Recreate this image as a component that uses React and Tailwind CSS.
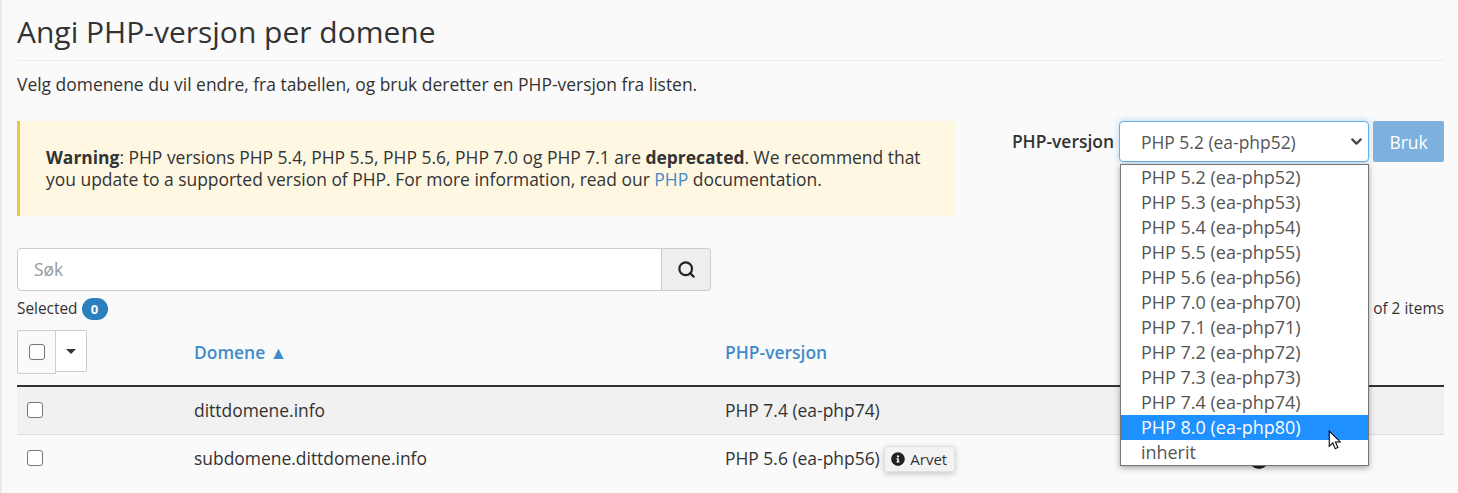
import { Search, ChevronDown } from 'lucide-react';

const versions = [
  'PHP 5.2 (ea-php52)',
  'PHP 5.3 (ea-php53)',
  'PHP 5.4 (ea-php54)',
  'PHP 5.5 (ea-php55)',
  'PHP 5.6 (ea-php56)',
  'PHP 7.0 (ea-php70)',
  'PHP 7.1 (ea-php71)',
  'PHP 7.2 (ea-php72)',
  'PHP 7.3 (ea-php73)',
  'PHP 7.4 (ea-php74)',
  'PHP 8.0 (ea-php80)',
  'inherit',
];

// native-looking checkbox, same box in the header and the rows
function Box() {
  return <span className="block size-4 rounded-[3px] border border-[#767676] bg-white" />;
}

function InfoCircle({ className }) {
  return (
    <svg viewBox="0 0 512 512" className={className} fill="currentColor">
      <path d="M256 8C119 8 8 119 8 256s111 248 248 248 248-111 248-248S393 8 256 8zm0 110a42 42 0 1 1 0 84 42 42 0 0 1 0-84zm56 254c0 7-5 12-12 12h-88c-7 0-12-5-12-12v-24c0-7 5-12 12-12h12v-64h-12c-7 0-12-5-12-12v-24c0-7 5-12 12-12h64c7 0 12 5 12 12v100h12c7 0 12 5 12 12v24z" />
    </svg>
  );
}

function Row({ name, version, striped, inherited }) {
  return (
    <div className={`grid h-[48px] grid-cols-[177px_531px_524px_1fr] items-center ${striped ? 'border-b border-[#dedede] bg-[#f1f1f1] pb-[1px]' : 'pb-[2px]'}`}>
      <div className="pl-[10px]"><Box /></div>
      <div>{name}</div>
      <div className="flex items-center">
        <span className="shrink-0">{version}</span>
        {inherited && (
          <span className="ml-[4px] mt-[2px] flex h-[26px] w-[71px] shrink-0 items-center justify-center gap-[5px] rounded-[2px] border border-[#e0e0e0] bg-[#f3f3f3] text-[15px] shadow-[0_2px_6px_rgba(0,0,0,0.2)]">
            <InfoCircle className="size-[14px] text-[#222]" />
            Arvet
          </span>
        )}
      </div>
      <div>{inherited && <span className="mt-[1px] block size-5 rounded-full bg-[#222]" />}</div>
    </div>
  );
}

export default function App() {
  return (
    <div className="relative h-[493px] overflow-hidden bg-[#fafafa] pl-[17px] pr-[14px] font-['Open_Sans',sans-serif] text-[17.45px] leading-[22px] text-[#333]">
      <div className="absolute inset-y-0 left-0 w-[3px] bg-gradient-to-r from-[#e4e4e4] to-[#fafafa]" />

      <h1 className="flex h-[61px] items-end border-b border-[#eee] pb-[9px] text-[30px] leading-[38px]">Angi PHP-versjon per domene</h1>
      <p className="mt-[12px]">Velg domenene du vil endre, fra tabellen, og bruk deretter en PHP-versjon fra listen.</p>

      <div className="mt-[26px] flex justify-between">
        <div className="h-[95px] w-[938px] border-l-[3px] border-[#f5c34d] bg-[#fef8e3] pl-[26px] pr-[20px] pt-[25px]">
          <strong className="font-bold">Warning</strong>: PHP versions PHP 5.4, PHP 5.5, PHP 5.6, PHP 7.0 og PHP 7.1 are <strong className="font-bold">deprecated</strong>. We recommend that you update to a supported version of PHP. For more information, read our <span className="text-[#428bca]">PHP</span> documentation.
        </div>

        <div className="relative flex h-[41px] items-center">
          <label className="mr-[5px] -mt-[2px] font-semibold">PHP-versjon</label>
          <div className="flex h-[41px] w-[250px] items-center justify-between rounded-[4px] border border-[#66afe9] bg-white pl-[21px] pr-[3px] text-[#555] shadow-[0_0_6px_rgba(102,175,233,0.5)]">
            PHP 5.2 (ea-php52)
            <ChevronDown size={17} strokeWidth={3} className="text-[#444]" />
          </div>
          <button type="button" className="ml-[4px] h-[41px] w-[71px] rounded-[2px] bg-[#7eb0de] text-white">Bruk</button>

          <ul className="absolute left-[108px] top-[43px] z-10 w-[249px] border border-[#767676] bg-white text-[18px] text-[#555] shadow-[0_2px_6px_rgba(0,0,0,0.35)]">
            {versions.map((v) => (
              <li key={v} className={`h-[25px] pl-[20px] leading-[25px] ${v === 'PHP 8.0 (ea-php80)' ? 'bg-[#1e90ff] text-white' : ''}`}>{v}</li>
            ))}
          </ul>
        </div>
      </div>

      <div className="mt-[32px] flex h-[43px] w-[694px]">
        <div className="flex flex-1 items-center rounded-l-[4px] border border-[#ccc] bg-white pb-[2px] pl-[16px] text-[#999]">Søk</div>
        <div className="flex w-[49px] items-center justify-center rounded-r-[4px] border border-l-0 border-[#ccc] bg-[#eee]">
          <Search size={19} strokeWidth={2.75} className="text-[#222]" />
        </div>
      </div>

      <div className="relative mt-[7px] flex h-[22px] items-center text-[15.4px]">
        <span className="-mt-[1px]">Selected</span>
        <span className="ml-[4px] flex h-[22px] w-[26px] items-center justify-center rounded-full bg-[#2a80bd] text-[13px] font-bold text-white">0</span>
        <span className="-mt-[1px] ml-auto">1 - 2 of 2 items</span>
      </div>

      <div className="mt-[10px] grid h-[57px] grid-cols-[177px_531px_1fr] border-b-2 border-[#333]">
        <div className="flex items-start">
          <div className="flex h-[44px] w-[39px] items-center justify-center rounded-l-[2px] border border-[#ccc] bg-[#fafafa]"><Box /></div>
          <div className="flex h-[42px] w-[31px] items-center justify-center rounded-r-[2px] border border-l-0 border-[#ccc] bg-white">
            <span className="border-x-[5px] border-t-[5px] border-x-transparent border-t-[#333]" />
          </div>
        </div>
        <div className="pt-[11px] font-semibold text-[#428bca]">Domene ▲</div>
        <div className="pt-[11px] font-semibold text-[#428bca]">PHP-versjon</div>
      </div>

      <Row name="dittdomene.info" version="PHP 7.4 (ea-php74)" striped />
      <Row name="subdomene.dittdomene.info" version="PHP 5.6 (ea-php56)" inherited />

      {/* mouse pointer over the open list */}
      <svg viewBox="0 0 12 19" className="absolute left-[1328px] top-[430px] z-20 h-[20px] w-[13px]">
        <path d="M1 1v14.5l3.4-3.2 2.3 5.4 2.5-1-2.3-5.3h4.6z" fill="#fff" stroke="#000" strokeWidth="1" />
      </svg>
    </div>
  );
}
